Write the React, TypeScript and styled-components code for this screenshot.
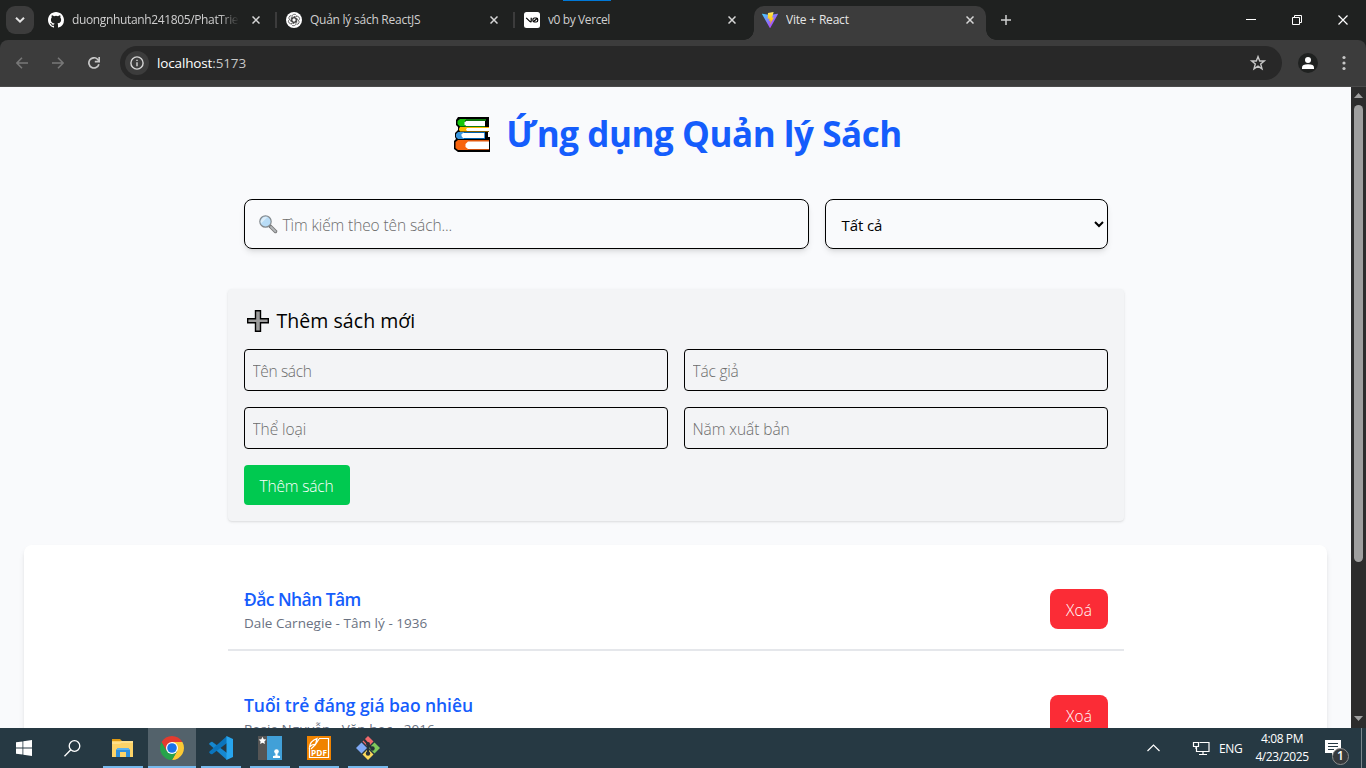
import React from 'react';
import styled, { createGlobalStyle, css } from 'styled-components';

const GlobalStyle = createGlobalStyle`
  *, *::before, *::after { box-sizing: border-box; }
  body { margin: 0; overflow: hidden; font-family: 'Open Sans', 'Noto Sans', sans-serif; }
  button, input { font-family: inherit; margin: 0; }
  h1, h2, h3, p { margin: 0; }
  svg { display: block; flex: none; }
`;

const Screen = styled.div`
  width: 1366px;
  height: 768px;
  display: flex;
  flex-direction: column;
  overflow: hidden;
`;

/* ---------- Browser chrome ---------- */

const TabStrip = styled.div`
  position: relative;
  height: 40px;
  flex: none;
  display: flex;
  background: #1f2120;
  padding-left: 6px;
`;

const LoadMark = styled.div`
  position: absolute;
  top: 0;
  left: 563px;
  width: 48px;
  height: 1px;
  background: #0078d7;
`;

const TabSearch = styled.button`
  width: 28px;
  height: 28px;
  margin: 6px 6px 0 0;
  padding: 0;
  border: 0;
  border-radius: 9px;
  background: #3c3c3c;
  display: grid;
  place-items: center;
`;

const Tab = styled.div<{ $active?: boolean }>`
  position: relative;
  width: 232px;
  height: 34px;
  margin: 6px 6px 0 0;
  padding: 0 12px 6px 8px;
  display: flex;
  align-items: center;
  border-radius: 10px 10px 0 0;
  ${(p) =>
    p.$active &&
    css`
      background: #3c3c3c;
      &::before,
      &::after {
        content: '';
        position: absolute;
        bottom: 0;
        width: 10px;
        height: 10px;
      }
      &::before {
        left: -10px;
        background: radial-gradient(circle at 0 0, transparent 9.5px, #3c3c3c 10px);
      }
      &::after {
        right: -10px;
        background: radial-gradient(circle at 100% 0, transparent 9.5px, #3c3c3c 10px);
      }
    `}
`;

const TabDivider = styled.i`
  position: absolute;
  right: -5px;
  top: 6px;
  width: 2px;
  height: 16px;
  background: #3c3c3c;
`;

const TabTitle = styled.span<{ $active?: boolean; $fade?: boolean; $track: number }>`
  flex: 1;
  min-width: 0;
  margin: 0 13px 0 8px;
  overflow: hidden;
  white-space: nowrap;
  font-size: 12px;
  line-height: 18px;
  letter-spacing: ${(p) => p.$track}px;
  color: ${(p) => (p.$active ? '#e6e6e6' : '#cfcfcf')};
  ${(p) => p.$fade && 'mask-image: linear-gradient(90deg, #000 88%, transparent 100%);'}
`;

const NewTab = styled.div`
  width: 28px;
  height: 28px;
  margin-top: 6px;
  display: grid;
  place-items: center;
`;

const WindowControls = styled.div`
  margin-left: auto;
  display: flex;
  & > span {
    width: 46px;
    height: 40px;
    display: grid;
    place-items: center;
  }
`;

const ToolbarBack = styled.div`
  height: 47px;
  flex: none;
  background: #1f2120;
`;

const Toolbar = styled.div`
  height: 47px;
  background: #3c3c3c;
  border-bottom: 1px solid #4a4a4a;
  border-radius: 8px 8px 0 0;
  display: flex;
  align-items: center;
  padding: 0 0 0 4px;
`;

const NavButton = styled.span`
  width: 36px;
  height: 34px;
  display: grid;
  place-items: center;
`;

const Omnibox = styled.div`
  width: 1162px;
  height: 34px;
  flex: none;
  margin-left: 8px;
  padding: 0 14px 0 5px;
  border-radius: 17px;
  background: #282828;
  display: flex;
  align-items: center;
`;

const SiteInfo = styled.span`
  width: 24px;
  height: 24px;
  border-radius: 50%;
  background: #3c3c3c;
  display: grid;
  place-items: center;
`;

const Address = styled.span`
  flex: 1;
  margin-left: 8px;
  font-size: 13.5px;
  line-height: 20px;
  letter-spacing: -0.14px;
  color: #c7c7c7;
  b {
    font-weight: 400;
    color: #fff;
  }
`;

/* ---------- Web page ---------- */

const Viewport = styled.div`
  height: 641px;
  flex: none;
  display: flex;
  overflow: hidden;
`;

const Page = styled.main`
  flex: 1;
  height: 641px;
  overflow: hidden;
  padding: 24px;
  background: #f9fafc;
  color: #000;
`;

const Title = styled.h1`
  display: flex;
  align-items: center;
  justify-content: center;
  height: 40px;
  margin-bottom: 32px;
  padding-left: 5px;
  font-size: 35px;
  font-weight: 700;
  line-height: 40px;
  color: #155dfc;
  svg {
    margin: 7px 16px 0 0;
  }
  span {
    position: relative;
    top: 3px;
    letter-spacing: -0.45px;
    white-space: nowrap;
  }
`;

const Filters = styled.div`
  width: 896px;
  margin: 0 auto 24px;
  padding: 16px;
  display: grid;
  grid-template-columns: 565px 283px;
  gap: 16px;
`;

const FilterBox = styled.div<{ $pad: string }>`
  height: 50px;
  display: flex;
  align-items: center;
  padding: ${(p) => p.$pad};
  border: 1px solid #000;
  border-radius: 8px;
  box-shadow: 0 4px 6px -1px rgba(0, 0, 0, 0.1), 0 2px 4px -2px rgba(0, 0, 0, 0.1);
`;

const SearchHint = styled.span`
  margin-left: 5px;
  padding-top: 1px;
  font-size: 15.5px;
  font-weight: 300;
  color: #6c6c6c;
  letter-spacing: -0.11px;
`;

const Choice = styled.span`
  flex: 1;
  font-size: 15px;
  letter-spacing: -0.1px;
  padding-top: 2px;
`;

const AddForm = styled.form`
  width: 896px;
  margin: 0 auto 24px;
  padding: 16px;
  border-radius: 4px;
  background: #f3f4f6;
  box-shadow: 0 1px 3px rgba(0, 0, 0, 0.1), 0 1px 2px -1px rgba(0, 0, 0, 0.1);
`;

const FormTitle = styled.h2`
  display: flex;
  align-items: center;
  height: 28px;
  margin-bottom: 16px;
  padding-left: 3px;
  font-size: 19.5px;
  font-weight: 500;
  line-height: 28px;
  svg {
    margin: 4px 8px 0 0;
  }
  span {
    padding-top: 3px;
    letter-spacing: 0.05px;
  }
`;

const Fields = styled.div`
  display: grid;
  grid-template-columns: 424px 424px;
  gap: 16px;
`;

const Field = styled.input<{ $track: number }>`
  height: 42px;
  padding: 1px 8px 0;
  border: 1px solid #000;
  border-radius: 4px;
  background: transparent;
  font-size: 15.5px;
  letter-spacing: ${(p) => p.$track}px;
  &::placeholder {
    color: #6c6c6c;
    font-weight: 300;
    opacity: 1;
  }
`;

const Action = styled.button<{ $danger?: boolean }>`
  width: ${(p) => (p.$danger ? 58 : 106)}px;
  height: 40px;
  padding: 1px 0 0;
  border: 0;
  border-radius: ${(p) => (p.$danger ? 8 : 4)}px;
  background: ${(p) => (p.$danger ? '#fb2c36' : '#00c950')};
  color: #fff;
  font-size: 15.5px;
  font-weight: 300;
  letter-spacing: ${(p) => (p.$danger ? 0.2 : -0.15)}px;
  white-space: nowrap;
`;

const BookList = styled.section`
  width: 1303px;
  height: 300px;
  padding: 24px 204px;
  border-radius: 8px;
  background: #fff;
  box-shadow: 0 4px 6px -1px rgba(0, 0, 0, 0.1), 0 2px 4px -2px rgba(0, 0, 0, 0.1);
`;

const BookRow = styled.article`
  width: 896px;
  height: 82px;
  margin-bottom: 24px;
  padding: 16px;
  border-bottom: 2px solid #e5e7eb;
  display: flex;
  justify-content: space-between;
  align-items: center;
`;

const BookTitle = styled.h3<{ $track: number }>`
  font-size: 17.5px;
  font-weight: 600;
  line-height: 28px;
  height: 28px;
  letter-spacing: ${(p) => p.$track}px;
  color: #155dfc;
`;

const BookMeta = styled.p`
  font-size: 13.5px;
  line-height: 20px;
  letter-spacing: 0.04px;
  color: #6a7282;
`;

const ScrollTrack = styled.div`
  width: 15px;
  height: 641px;
  background: #2c2c2c;
  display: flex;
  flex-direction: column;
  align-items: center;
  justify-content: space-between;
  padding: 6px 0 7px;
`;

const ScrollThumb = styled.div`
  width: 9px;
  height: 457px;
  margin: 7px 0 auto;
  border-radius: 5px;
  background: #9f9f9f;
`;

/* ---------- Taskbar ---------- */

const Taskbar = styled.footer`
  height: 40px;
  flex: none;
  display: flex;
  background: #263943;
  color: #fff;
`;

const StartArea = styled.div`
  width: 99px;
  display: flex;
  & > span {
    width: 48px;
    height: 40px;
    display: grid;
    place-items: center;
  }
`;

const Task = styled.div<{ $active?: boolean }>`
  width: 48px;
  height: 40px;
  margin-right: 1px;
  display: flex;
  flex-direction: column;
  align-items: center;
  justify-content: space-between;
  padding-top: 8px;
  background: ${(p) => (p.$active ? '#53626b' : 'transparent')};
  &::after {
    content: '';
    width: ${(p) => (p.$active ? 48 : 40)}px;
    height: 2px;
    background: #76b9ed;
  }
`;

const Tray = styled.div`
  margin-left: auto;
  display: flex;
  align-items: center;
  height: 40px;
  font-size: 12px;
`;

const Language = styled.span`
  width: 24px;
  margin: 0 12px 0 9px;
  letter-spacing: -0.4px;
  white-space: nowrap;
`;

const Clock = styled.div`
  width: 54px;
  text-align: center;
  line-height: 18px;
  letter-spacing: -0.4px;
  white-space: nowrap;
  display: flex;
  flex-direction: column;
  align-items: center;
`;

const Notice = styled.div`
  position: relative;
  width: 37px;
  height: 40px;
  margin-left: 16px;
  padding: 12px 0 0;
  border-right: 1px solid #7b878d;
`;

const NoticeCount = styled.span`
  position: absolute;
  left: 7px;
  top: 20px;
  width: 17px;
  height: 17px;
  border: 1px solid #8d8d8d;
  border-radius: 50%;
  background: #36393c;
  font-size: 12px;
  font-weight: 600;
  line-height: 14px;
  text-align: center;
`;

/* ---------- Icons ---------- */

const CloseIcon = ({ size = 8, color = '#d6d6d6', weight = 1.5 }) => (
  <svg width={size} height={size} viewBox={`0 0 ${size} ${size}`} stroke={color} strokeWidth={weight}>
    <path d={`M.5 .5L${size - 0.5} ${size - 0.5}M${size - 0.5} .5L.5 ${size - 0.5}`} />
  </svg>
);

const GithubIcon = () => (
  <svg width="16" height="16" viewBox="0 0 16 16" fill="#fff">
    <path d="M8 0C3.58 0 0 3.58 0 8c0 3.54 2.29 6.53 5.47 7.59.4.07.55-.17.55-.38 0-.19-.01-.82-.01-1.49-2.01.37-2.53-.49-2.69-.94-.09-.23-.48-.94-.82-1.13-.28-.15-.68-.52-.01-.53.63-.01 1.08.58 1.23.82.72 1.21 1.87.87 2.33.66.07-.52.28-.87.51-1.07-1.78-.2-3.64-.89-3.64-3.95 0-.87.31-1.59.82-2.15-.08-.2-.36-1.02.08-2.12 0 0 .67-.21 2.2.82a7.4 7.4 0 0 1 4 0c1.53-1.04 2.2-.82 2.2-.82.44 1.1.16 1.92.08 2.12.51.56.82 1.27.82 2.15 0 3.07-1.87 3.75-3.65 3.95.29.25.54.73.54 1.48 0 1.07-.01 1.93-.01 2.2 0 .21.15.46.55.38A8 8 0 0 0 16 8c0-4.42-3.58-8-8-8z" />
  </svg>
);

const ChatIcon = () => (
  <svg width="16" height="16" viewBox="0 0 16 16">
    <circle cx="8" cy="8" r="8" fill="#fff" />
    <g fill="none" stroke="#333" strokeWidth=".65">
      {[0, 60, 120, 180, 240, 300].map((a) => (
        <path key={a} transform={`rotate(${a} 8 8)`} d="M6 9.200V4.900A2.400 2.400 0 0 1 10.500 3.500M6 6.700L8.500 5.200 11.700 7" />
      ))}
    </g>
  </svg>
);

const V0Icon = () => (
  <svg width="16" height="16" viewBox="0 0 16 16">
    <rect width="16" height="16" rx="2.5" fill="#fff" />
    <g fill="none" stroke="#000" strokeWidth="1.200">
      <path d="M2.200 5.800L6 9.600Q7.200 10.400 7.200 9V5.800" />
      <rect x="8.900" y="6" width="4.800" height="4" rx="1.500" />
      <path d="M9.300 9.700L13.300 6.300" />
    </g>
  </svg>
);

const ViteIcon = () => (
  <svg width="16" height="16" viewBox="0 0 16 16">
    <defs>
      <linearGradient id="viteBody" x1="0" y1="0" x2="1" y2="1">
        <stop offset="0" stopColor="#41d1ff" />
        <stop offset=".6" stopColor="#9a60fa" />
        <stop offset="1" stopColor="#bd34fe" />
      </linearGradient>
      <linearGradient id="viteBolt" x1="0" y1="0" x2="0" y2="1">
        <stop offset="0" stopColor="#ffea83" />
        <stop offset=".2" stopColor="#ffdd35" />
        <stop offset="1" stopColor="#ffa800" />
      </linearGradient>
    </defs>
    <path d="M15.9 2.3L8.4 15.7a.4.4 0 0 1-.7 0L.1 2.3a.4.4 0 0 1 .4-.6L8 3l7.5-1.3a.4.4 0 0 1 .4.6z" fill="url(#viteBody)" />
    <path d="M11.6 0L6 1.1l-.3 5.7 1.8-.4-.5 2.500 1.800-.500-1.200 4.600 4.400-7.600-1.900.3z" fill="url(#viteBolt)" />
  </svg>
);

const BooksIcon = () => (
  <svg width="36" height="35" viewBox="0 0 36 35">
    <path d="M4 0H35V15H34V20H36V35H4L0 32V24L2 22L1 20V16L4 13V10L2 8V3Z" fill="#000" />
    <path d="M6 2H32V3.500H11V9.500H6L3.500 7V4Z" fill="#16c60c" />
    <path d="M12 2H32V3.500H12Z" fill="#107c10" />
    <path d="M11 9H31V10H11Z" fill="#107c10" />
    <path d="M12 4H31V9H12L10.500 7.500V5.500Z" fill="#fff" />
    <path d="M6 10H35V14.500H6L5 13V11.500Z" fill="#ffb900" />
    <path d="M13 11H35V14H13L12 12.500Z" fill="#fff" />
    <path d="M4 15H31V22H4L2 20V17Z" fill="#3a96dd" />
    <path d="M10 15H31V16H10ZM10 21H31V22H10Z" fill="#0063b1" />
    <path d="M9 16H30V21H9L7.500 19V17.500Z" fill="#fff" />
    <path d="M4 23H35V33H4L1.500 31V25Z" fill="#f7630c" />
    <path d="M14 23.500H35V24.500H14ZM14 32H35V33H14Z" fill="#ca5010" />
    <path d="M14 24.500H35V32H14L11.500 30V27Z" fill="#fff" />
  </svg>
);

const MagnifierIcon = () => (
  <svg width="19" height="19" viewBox="0 0 19 19">
    <path d="M11 11L16.500 16.500" stroke="#777" strokeWidth="3.500" strokeLinecap="round" />
    <path d="M12 12L16.400 16.400" stroke="#b5b9bc" strokeWidth="1.800" strokeLinecap="round" />
    <circle cx="6.500" cy="6.500" r="5.700" fill="#b8dcf6" stroke="#858a8e" strokeWidth="1.200" />
    <path d="M2 8.500L8.500 2A5.200 5.200 0 0 0 2 8.500z" fill="#dcedf9" />
  </svg>
);

const PlusIcon = () => (
  <svg width="22" height="22" viewBox="0 0 22 22">
    <path d="M8.500 .7h5v8h7.800v4h-7.800v8.600h-5v-8.600h-7.800v-4h7.800z" fill="#9b9b9b" stroke="#000" strokeWidth="1.400" />
  </svg>
);

const WindowsIcon = () => (
  <svg width="16" height="16" viewBox="0 0 16 16" fill="#fff">
    <path d="M0 2.3L6.5 1.4V7.6H0zM7.3 1.3L16 0V7.6H7.3zM0 8.4H6.5V14.6L0 13.7zM7.3 8.4H16V16L7.3 14.7z" />
  </svg>
);

const ExplorerIcon = () => (
  <svg width="24" height="24" viewBox="0 0 24 24">
    <path d="M1 3H9L11 5V8H1Z" fill="#e09a12" />
    <path d="M1 5H22V21H1Z" fill="#fdd367" />
    <path d="M1 6H9L10.500 5H22V7H10L9 8H1Z" fill="#ffe08a" />
    <path d="M5 21V14L7 12H17L19 14V21H15V16H9V21Z" fill="#2f8fdd" />
    <path d="M5 14L7 12H17L19 14Z" fill="#5cb3f0" />
  </svg>
);

const ChromeIcon = () => (
  <svg width="24" height="24" viewBox="0 0 24 24">
    <path d="M12 12V6H22.390A12 12 0 0 1 12 24L17.200 15z" fill="#fcc934" />
    <path d="M12 12L17.200 15L12 24A12 12 0 0 1 1.610 6L6.800 15z" fill="#27a34a" />
    <path d="M12 12L6.800 15L1.610 6A12 12 0 0 1 22.390 6H12z" fill="#e33b2e" />
    <circle cx="12" cy="12" r="6" fill="#fff" />
    <circle cx="12" cy="12" r="4.8" fill="#1a73e8" />
  </svg>
);

const CodeIcon = () => (
  <svg width="24" height="24" viewBox="0 0 24 24">
    <path d="M18 24V17L3.200 5.800Q2.300 5.300 .3 7.300 0 8 .5 8.500z" fill="#1688d0" />
    <path d="M18 0V7L3.200 18.200Q2.300 18.700 .3 16.700 0 16 .5 15.500z" fill="#0b75bd" />
    <path d="M17.500 0L24 3V21L17.500 24z" fill="#27a5ee" />
  </svg>
);

const ContactIcon = () => (
  <svg width="24" height="24" viewBox="0 0 24 24">
    <path d="M0 0H9V24H0z" fill="#555" />
    <path d="M9 0H24V24H9z" fill="#41a0d8" />
    <path d="M4.500 .8l1.200 2.500 2.600.3-1.900 1.900.5 2.600-2.400-1.300L2.100 8.100l.5-2.600L.7 3.600l2.600-.3z" fill="#fff" />
    <circle cx="18.500" cy="15.500" r="2.300" fill="#fff" />
    <path d="M17.500 17h2v2.500l2.500.5v2h-7v-2l2.500-.5z" fill="#fff" />
  </svg>
);

const PdfLabel = styled.text`
  font: 700 8px 'Open Sans', sans-serif;
  fill: #fff;
`;

const PdfIcon = () => (
  <svg width="24" height="24" viewBox="0 0 24 24">
    <rect width="24" height="24" fill="#f08300" />
    <path d="M12 2.500H21.500V21.500H2.500V12" fill="none" stroke="#fff" strokeWidth="1.200" />
    <path d="M2.500 11Q3 5 10 2.500L8.500 8.500Q5 8 2.500 11zM4 13Q9 9 12 3" fill="none" stroke="#fff" strokeWidth="1.200" />
    <PdfLabel x="4" y="19.700" textLength="16" lengthAdjust="spacingAndGlyphs">PDF</PdfLabel>
  </svg>
);

const GitIcon = () => (
  <svg width="24" height="24" viewBox="0 0 24 24">
    <path d="M12 0L17.500 5.500 12 11 6.500 5.500z" fill="#f0696c" />
    <path d="M5.500 6.500L11 12 5.500 17.500 0 12z" fill="#7fa9f5" />
    <path d="M18.500 6.500L24 12 18.500 17.500 13 12z" fill="#80c95b" />
    <path d="M12 13L17.500 18.500 12 24 6.500 18.500z" fill="#fbd95b" />
    <path d="M8 3.500L12 8V18M12 9L16.500 12.500" fill="none" stroke="#263238" strokeWidth="2" />
    <circle cx="12" cy="8" r="2" fill="#263238" />
    <circle cx="12" cy="17.500" r="2.200" fill="#263238" />
    <circle cx="16.500" cy="12.500" r="2.200" fill="#263238" />
  </svg>
);

const tabs = [
  { title: 'duongnhutanh241805/PhatTrien', icon: <GithubIcon />, track: -0.36, fade: true, divider: true },
  { title: 'Quản lý sách ReactJS', icon: <ChatIcon />, track: -0.25, divider: true },
  { title: 'v0 by Vercel', icon: <V0Icon />, track: -0.4 },
  { title: 'Vite + React', icon: <ViteIcon />, track: -0.2, active: true },
];

const fields = [
  { label: 'Tên sách', track: -0.35 },
  { label: 'Tác giả', track: -0.2 },
  { label: 'Thể loại', track: -0.05 },
  { label: 'Năm xuất bản', track: -0.07 },
];

const books = [
  { title: 'Đắc Nhân Tâm', meta: 'Dale Carnegie - Tâm lý - 1936', track: -0.57 },
  { title: 'Tuổi trẻ đáng giá bao nhiêu', meta: 'Rosie Nguyễn - Văn học - 2016', track: -0.06 },
];

const BrowserTabs = () => (
  <TabStrip>
    <LoadMark />
    <TabSearch aria-label="Search tabs">
      <svg width="10" height="6" viewBox="0 0 10 6" fill="none" stroke="#e3e3e3" strokeWidth="2">
        <path d="M1 .8L5 4.600 9 .8" />
      </svg>
    </TabSearch>
    {tabs.map((t) => (
      <Tab key={t.title} $active={t.active}>
        {t.icon}
        <TabTitle $active={t.active} $fade={t.fade} $track={t.track}>
          {t.title}
        </TabTitle>
        <CloseIcon />
        {t.divider && <TabDivider />}
      </Tab>
    ))}
    <NewTab>
      <svg width="10" height="10" viewBox="0 0 10 10" stroke="#cfcfcf" strokeWidth="1.500">
        <path d="M5 0V10M0 5H10" />
      </svg>
    </NewTab>
    <WindowControls>
      <span>
        <svg width="10" height="3" viewBox="0 0 10 3">
          <path d="M0 0H10V1H0z" fill="#fff" />
        </svg>
      </span>
      <span>
        <svg width="10" height="10" viewBox="0 0 10 10" fill="none" stroke="#fff">
          <path d="M.5 2.500H7.500V9.500H.5zM2.500 2.500V.5H9.500V7.500H7.500" />
        </svg>
      </span>
      <span>
        <CloseIcon size={10} color="#fff" weight={1.2} />
      </span>
    </WindowControls>
  </TabStrip>
);

const BrowserToolbar = () => (
  <ToolbarBack>
    <Toolbar>
      <NavButton>
        <svg width="12" height="12" viewBox="0 0 12 12" fill="none" stroke="#787878" strokeWidth="1.500">
          <path d="M12 6H1M6 .7L.9 6 6 11.300" />
        </svg>
      </NavButton>
      <NavButton>
        <svg width="12" height="12" viewBox="0 0 12 12" fill="none" stroke="#787878" strokeWidth="1.500">
          <path d="M0 6H11M6 .7L11.100 6 6 11.300" />
        </svg>
      </NavButton>
      <NavButton>
        <svg width="12" height="12" viewBox="0 0 12 12" fill="none" stroke="#c7c7c7" strokeWidth="1.700">
          <path d="M10.900 7.200A5.100 5.100 0 1 1 9.800 2.500L11 4" />
          <path d="M11.200 0V4.700H6.800" />
        </svg>
      </NavButton>
      <Omnibox>
        <SiteInfo>
          <svg width="14" height="14" viewBox="0 0 14 14">
            <circle cx="7" cy="7" r="6.100" fill="none" stroke="#d5d5d5" strokeWidth="1.400" />
            <path d="M6.300 6.200H7.700V10.300H6.300zM6.300 3.700H7.700V5.100H6.300z" fill="#d5d5d5" />
          </svg>
        </SiteInfo>
        <Address>
          <b>localhost</b>:5173
        </Address>
        <svg width="20" height="20" viewBox="0 0 20 20" fill="none" stroke="#c7c7c7" strokeWidth="1.400">
          <path d="M10 3.600L11.700 8H16.300L12.700 11 14 15.900 10 13.100 6 15.900 7.300 11 3.700 8H8.300z" />
        </svg>
      </Omnibox>
      <svg width="84" height="24" viewBox="1282 51 84 24">
        <circle cx="1308" cy="63" r="10" fill="#1f2120" />
        <circle cx="1308" cy="60" r="3" fill="#fff" />
        <path d="M1302 69V67.500Q1302 64.200 1308 64.200T1314 67.500V69z" fill="#fff" />
        <g fill="#c7c7c7">
          <circle cx="1344" cy="57.500" r="1.600" />
          <circle cx="1344" cy="63" r="1.600" />
          <circle cx="1344" cy="68.500" r="1.600" />
        </g>
      </svg>
    </Toolbar>
  </ToolbarBack>
);

const BookManager = () => (
  <Page>
    <Title>
      <BooksIcon />
      <span>Ứng dụng Quản lý Sách</span>
    </Title>
    <Filters>
      <FilterBox $pad="0 14px">
        <MagnifierIcon />
        <SearchHint>Tìm kiếm theo tên sách...</SearchHint>
      </FilterBox>
      <FilterBox $pad="0 3px 0 16px">
        <Choice>Tất cả</Choice>
        <svg width="10" height="7" viewBox="0 0 10 7" fill="none" stroke="#000" strokeWidth="2">
          <path d="M1 1L5 5 9 1" />
        </svg>
      </FilterBox>
    </Filters>
    <AddForm onSubmit={(e) => e.preventDefault()}>
      <FormTitle>
        <PlusIcon />
        <span>Thêm sách mới</span>
      </FormTitle>
      <Fields>
        {fields.map((f) => (
          <Field key={f.label} placeholder={f.label} $track={f.track} />
        ))}
        <Action>Thêm sách</Action>
      </Fields>
    </AddForm>
    <BookList>
      {books.map((b) => (
        <BookRow key={b.title}>
          <div>
            <BookTitle $track={b.track}>{b.title}</BookTitle>
            <BookMeta>{b.meta}</BookMeta>
          </div>
          <Action $danger>Xoá</Action>
        </BookRow>
      ))}
    </BookList>
  </Page>
);

const WindowsTaskbar = () => (
  <Taskbar>
    <StartArea>
      <span>
        <WindowsIcon />
      </span>
      <span>
        <svg width="17" height="17" viewBox="0 0 17 17" fill="none" stroke="#fff" strokeWidth="1.300">
          <circle cx="10.500" cy="6" r="5.300" />
          <path d="M6.800 9.800L.5 16.300" />
        </svg>
      </span>
    </StartArea>
    <Task><ExplorerIcon /></Task>
    <Task $active><ChromeIcon /></Task>
    <Task><CodeIcon /></Task>
    <Task><ContactIcon /></Task>
    <Task><PdfIcon /></Task>
    <Task><GitIcon /></Task>
    <Tray>
      <svg width="64" height="16" viewBox="0 0 64 16" fill="none" stroke="#fff" strokeWidth="1.200">
        <path d="M1.500 11L7.500 5 13.500 11" />
        <path d="M53.500 2.500H63V11.500H50.500V7M57 11.500V14.500M53 14.500H61M47.500 2.500H52.500V6.500H47.500zM50 6.500V9" />
      </svg>
      <Language>ENG</Language>
      <Clock>
        <span>4:08 PM</span>
        <span>4/23/2025</span>
      </Clock>
      <Notice>
        <svg width="17" height="17" viewBox="0 0 17 17">
          <path d="M0 0H16V13H10L7 16V13H0z" fill="#fff" />
          <path d="M3 3.500H13M3 6.500H13M3 9.500H9" stroke="#263943" />
        </svg>
        <NoticeCount>1</NoticeCount>
      </Notice>
      <svg width="4" height="40" />
    </Tray>
  </Taskbar>
);

export default function App() {
  return (
    <Screen>
      <GlobalStyle />
      <BrowserTabs />
      <BrowserToolbar />
      <Viewport>
        <BookManager />
        <ScrollTrack>
          <svg width="9" height="5" viewBox="0 0 9 5"><path d="M0 5L4.500 0 9 5z" fill="#9f9f9f" /></svg>
          <ScrollThumb />
          <svg width="9" height="5" viewBox="0 0 9 5"><path d="M0 0L4.500 5 9 0z" fill="#9f9f9f" /></svg>
        </ScrollTrack>
      </Viewport>
      <WindowsTaskbar />
    </Screen>
  );
}
